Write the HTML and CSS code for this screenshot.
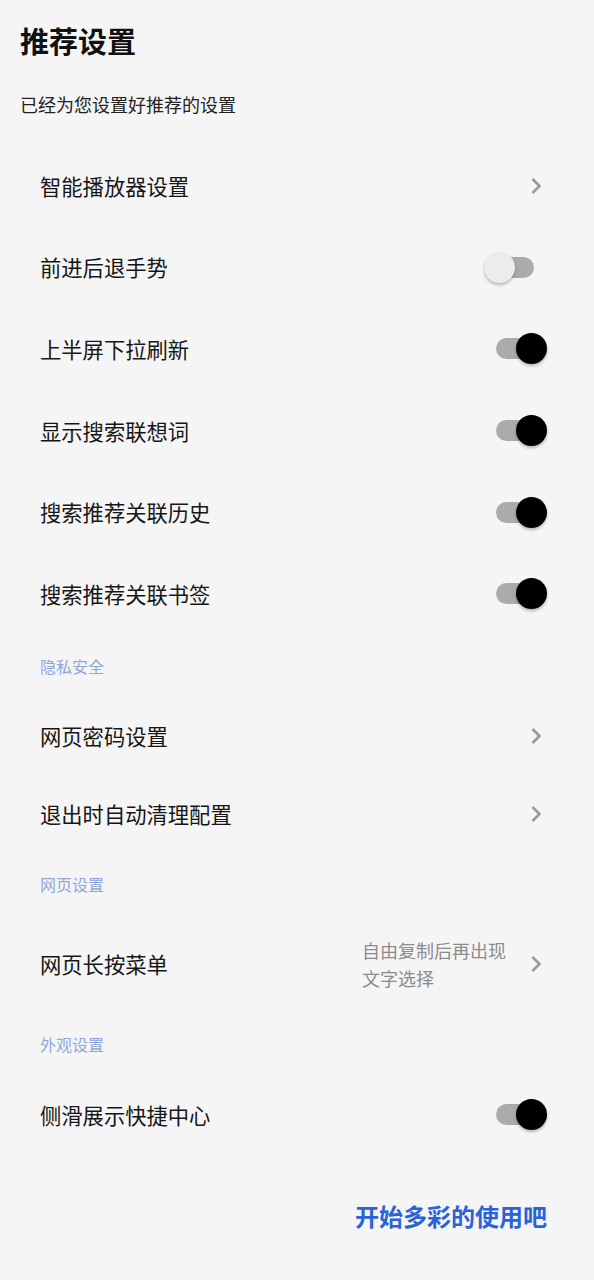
FILE: index.html
```html
<!DOCTYPE html>
<html lang="zh-CN">

<head>
    <meta charset="UTF-8">
    <meta name="viewport"
        content="width=device-width, initial-scale=1.0">
    <title>推荐设置</title>
    <link rel="stylesheet" href="styles.css">
</head>

<body>
    <header class="page-header">
        <h1>推荐设置</h1>
        <p class="subtitle">已经为您设置好推荐的设置</p>
    </header>
    <main>
        <div class="group group-main">
            <div class="row">
                <span class="label">智能播放器设置</span>
                <svg class="chevron" width="12" height="18" viewBox="0 0 12 18"><polyline points="2.5,2 9.5,9 2.5,16" /></svg>
            </div>
            <div class="row">
                <span class="label">前进后退手势</span>
                <span class="switch"><span class="track"></span><span class="thumb"></span></span>
            </div>
            <div class="row">
                <span class="label">上半屏下拉刷新</span>
                <span class="switch on"><span class="track"></span><span class="thumb"></span></span>
            </div>
            <div class="row">
                <span class="label">显示搜索联想词</span>
                <span class="switch on"><span class="track"></span><span class="thumb"></span></span>
            </div>
            <div class="row">
                <span class="label">搜索推荐关联历史</span>
                <span class="switch on"><span class="track"></span><span class="thumb"></span></span>
            </div>
            <div class="row">
                <span class="label">搜索推荐关联书签</span>
                <span class="switch on"><span class="track"></span><span class="thumb"></span></span>
            </div>
        </div>

        <div class="section-title">隐私安全</div>
        <div class="group">
            <div class="row">
                <span class="label">网页密码设置</span>
                <svg class="chevron" width="12" height="18" viewBox="0 0 12 18"><polyline points="2.5,2 9.5,9 2.5,16" /></svg>
            </div>
            <div class="row">
                <span class="label">退出时自动清理配置</span>
                <svg class="chevron" width="12" height="18" viewBox="0 0 12 18"><polyline points="2.5,2 9.5,9 2.5,16" /></svg>
            </div>
        </div>

        <div class="section-title">网页设置</div>
        <div class="group">
            <div class="row row-value">
                <span class="label">网页长按菜单</span>
                <span class="value-wrap">
                    <span class="value">自由复制后再出现文字选择</span>
                    <svg class="chevron" width="12" height="18" viewBox="0 0 12 18"><polyline points="2.5,2 9.5,9 2.5,16" /></svg>
                </span>
            </div>
        </div>

        <div class="section-title">外观设置</div>
        <div class="group">
            <div class="row row-last">
                <span class="label">侧滑展示快捷中心</span>
                <span class="switch on"><span class="track"></span><span class="thumb"></span></span>
            </div>
        </div>

        <div class="footer">
            <a class="start-link" href="#">开始多彩的使用吧</a>
        </div>
    </main>
</body>

</html>
```

FILE: styles.css
```css
body {
    font-family: "Noto Sans CJK SC", "Noto Sans", sans-serif;
    background-color: #f5f5f5;
    color: #1a1a1a;
    margin: 0;
    padding: 0;
}

.page-header {
    padding: 20px 20px 0;
}

.page-header h1 {
    margin: 0;
    font-size: 29px;
    line-height: 40px;
    font-weight: bold;
    color: #111;
}

.subtitle {
    margin: 32px 0 0;
    font-size: 18px;
    line-height: 24px;
    color: #222;
}

main {
    padding-top: 29px;
}

.row {
    display: flex;
    align-items: center;
    justify-content: space-between;
    height: 78px;
    padding: 0 47px 0 40px;
}

.group-main .row {
    height: 81.6px;
}

.row-value {
    height: 98px;
}

.row-last {
    height: 80px;
}

.label {
    font-size: 21.3px;
    line-height: 28px;
    color: #161616;
}

.chevron {
    margin-right: 5px;
    fill: none;
    stroke: #9a9a9a;
    stroke-width: 2.6;
}

.value-wrap {
    display: flex;
    align-items: center;
    gap: 22px;
}

.value {
    width: 146px;
    font-size: 18px;
    line-height: 28px;
    color: #8c8c8c;
}

.section-title {
    padding: 22px 40px;
    font-size: 16px;
    line-height: 18px;
    color: #8ea8dc;
}

.switch {
    position: relative;
    width: 63px;
    height: 31px;
}

.switch .track {
    position: absolute;
    left: 12px;
    top: 5px;
    width: 38px;
    height: 21px;
    border-radius: 11px;
    background-color: #ababab;
}

.switch .thumb {
    position: absolute;
    left: 0;
    top: 0;
    width: 31px;
    height: 31px;
    border-radius: 50%;
    background-color: #ececec;
    box-shadow: 0 2px 3px rgba(0, 0, 0, 0.25);
}

.switch.on .thumb {
    left: 32px;
    background-color: #000;
}

.footer {
    display: flex;
    justify-content: flex-end;
    padding: 44px 47px 0 0;
}

.start-link {
    font-size: 24px;
    line-height: 34px;
    font-weight: bold;
    color: #2a62d8;
    text-decoration: none;
}
```
